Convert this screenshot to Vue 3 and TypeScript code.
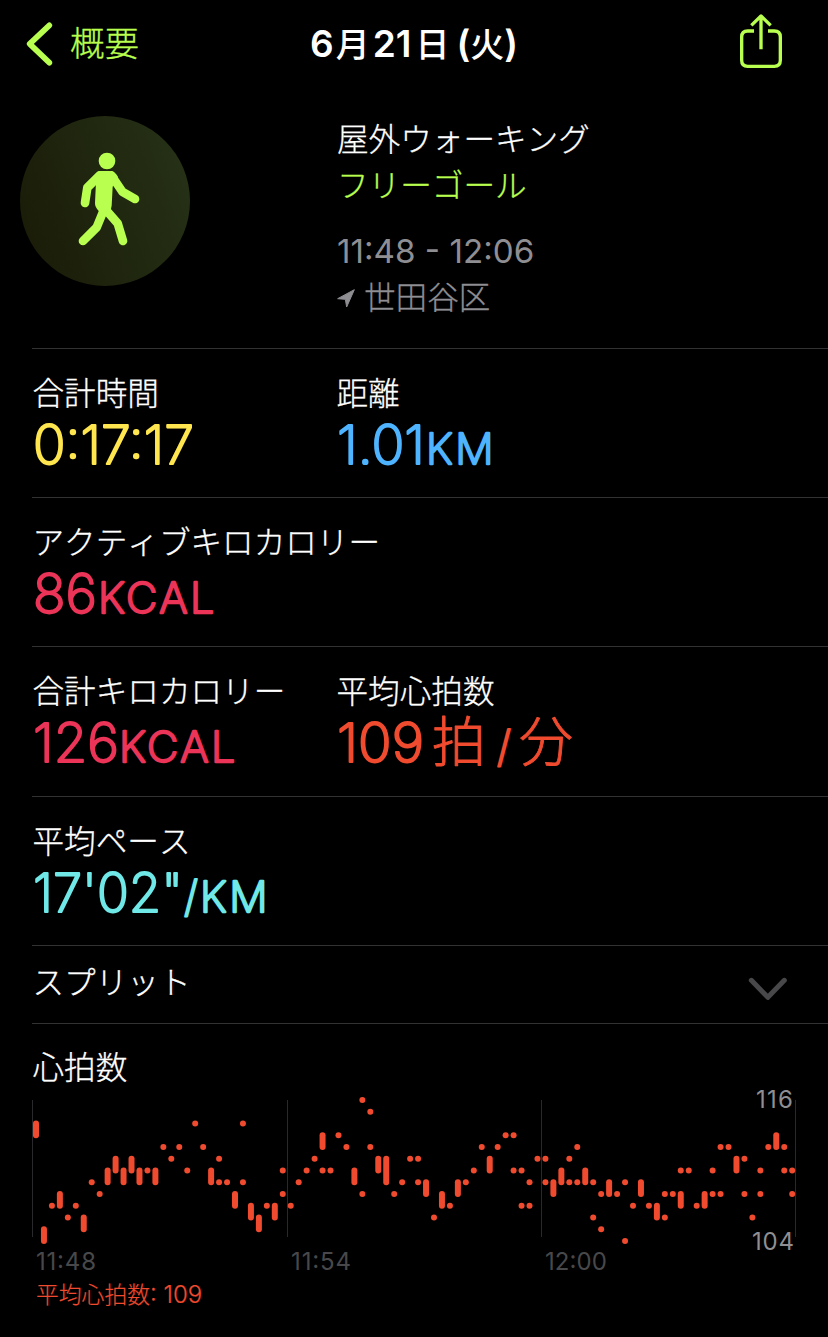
<script setup lang="ts">
interface Segment {
  text: string
  x: number
  size: number
  width: number
  kind?: 'cjk' | 'unit'
}
interface Metric {
  label: string
  tone: string
  segments: Segment[]
}

const rows: Metric[][] = [
  [
    { label: '合計時間', tone: 'yellow', segments: [{ text: '0:17:17', x: 0, size: 54, width: 161 }] },
    {
      label: '距離',
      tone: 'blue',
      segments: [
        { text: '1.01', x: 0, size: 54, width: 88 },
        { text: 'KM', x: 89, size: 42, width: 70, kind: 'unit' },
      ],
    },
  ],
  [
    {
      label: 'アクティブキロカロリー',
      tone: 'pink',
      segments: [
        { text: '86', x: 0, size: 54, width: 64 },
        { text: 'KCAL', x: 65, size: 42, width: 119, kind: 'unit' },
      ],
    },
  ],
  [
    {
      label: '合計キロカロリー',
      tone: 'pink',
      segments: [
        { text: '126', x: 0, size: 54, width: 86 },
        { text: 'KCAL', x: 86, size: 42, width: 119, kind: 'unit' },
      ],
    },
    {
      label: '平均心拍数',
      tone: 'red',
      segments: [
        { text: '109', x: 0, size: 54, width: 87 },
        { text: '拍', x: 95, size: 54, width: 54, kind: 'cjk' },
        { text: '/', x: 160, size: 43, width: 14 },
        { text: '分', x: 182, size: 54, width: 54, kind: 'cjk' },
      ],
    },
  ],
  [
    {
      label: '平均ペース',
      tone: 'teal',
      segments: [
        { text: '17\'02"', x: 0, size: 54, width: 150 },
        { text: '/', x: 151, size: 43, width: 14 },
        { text: 'KM', x: 167, size: 42, width: 70, kind: 'unit' },
      ],
    },
  ],
]

// One entry per time slot; each pair is the highest and lowest rate of a mark.
const slots: string[] = (
  '114-113 105-104 107 108-107 106 107 106-105 109 108 110-109 111-110 110-109 111-110 110-109 110 110-109 ' +
  '112 111 112 110 114 112 110-109 111,109 109 108-107 114,109 107-106 106-105 107 107-106 110,108 ' +
  '107 109 110 111 113-112,110 110 113 112 110-109 116,108 115,112 111-110 111-109 108 109 111 ' +
  '111,109 109-108 106 108-107 107 109-108 109 110 112 111-110 112 113 113,110 110,107 109,107 111 ' +
  '111,109 109-108 110-109 111,109 112,109 110-109 109,106 108,105 109-108 108 109,104 107 109-108 107 107-106 108,106 ' +
  '108 110,108-107 110 107 108-107 110,108 112,108 112 111-110 111,108 106 110,108 112 113-112 112,110 110,108'
).split(' ')

const yOf = (bpm: number): number => 10 + (116 - bpm) * 11.75

const marks = slots.flatMap((slot, i) =>
  slot.split(',').map((range) => {
    const [hi, lo = hi] = range.split('-').map(Number)
    return { x: 33 + i * 7.96, y: yOf(hi) - 3, h: yOf(lo) - yOf(hi) + 6 }
  }),
)
</script>

<template>
  <main class="screen">
    <header class="bar">
      <div class="back">
        <svg class="back-icon" viewBox="78 60 84 138"><path d="M148 73 89 128.500 148 185" /></svg>
        <span>概要</span>
      </div>
      <h1 class="title">
        <b>6</b><span class="month">月</span><b class="n21">21</b><span class="day">日</span><b class="paren">(</b><span>火</span><b>)</b>
      </h1>
      <svg class="share" viewBox="972 36 138 174">
        <path d="M1020 93H1001Q983 93 983 111V181Q983 199 1001 199H1081Q1099 199 1099 181V111Q1099 93 1081 93H1062M1041 148V50M1012 76 1041 48 1070 76" />
      </svg>
    </header>

    <section class="summary">
      <div class="badge">
        <svg viewBox="60 48 510 510">
          <circle cx="321" cy="183" r="25" />
          <path class="torso" d="M296 213H328Q346 214 354 231L338 260 335 317Q334 328 328 335H298Q284 321 285 308L288 245Z" />
          <path class="limb" d="M299 226 262 263 255 309M334 226 367 275 405 297M311 331 290 382 249 423M319 331 353 370 369 423" />
        </svg>
      </div>
      <div class="details">
        <p class="kind">屋外ウォーキング</p>
        <p class="goal">フリーゴール</p>
        <p class="time">11:48 - 12:06</p>
        <p class="place">
          <svg viewBox="50 568 54 56"><path d="M52 597 102 570 79 622 75 599Z" /></svg>
          <span>世田谷区</span>
        </p>
      </div>
    </section>

    <section v-for="(row, r) in rows" :key="r" class="row" :class="{ tall: r === 2 }">
      <div v-for="m in row" :key="m.label" class="metric" :class="m.tone">
        <h2 class="label">{{ m.label }}</h2>
        <svg class="value" width="300" height="64">
          <text
            v-for="s in m.segments"
            :key="s.x"
            :x="s.x"
            y="51"
            :font-size="s.size"
            :textLength="s.width"
            lengthAdjust="spacingAndGlyphs"
            :class="s.kind"
          >{{ s.text }}</text>
        </svg>
      </div>
    </section>

    <section class="row splits">
      <h2 class="label">スプリット</h2>
      <svg class="chevron" viewBox="84 81 120 72"><path d="M94 91 143.500 142 193 91" /></svg>
    </section>

    <section class="row heart">
      <h2 class="label">心拍数</h2>
      <svg class="chart" width="828" height="190" viewBox="0 0 828 190">
        <path class="grid" d="M32.500 10V147M287.500 10V147M541.500 10V147M795.500 10V147" />
        <rect v-for="(m, i) in marks" :key="i" :x="m.x" :y="m.y" width="6" :height="m.h" rx="3" />
        <text class="limit" x="756" y="17.500" textLength="37">116</text>
        <text class="limit" x="752" y="159.500" textLength="42">104</text>
        <text class="tick" x="36" y="179.500" textLength="60">11:48</text>
        <text class="tick" x="291" y="179.500" textLength="60">11:54</text>
        <text class="tick" x="545" y="179.500" textLength="62">12:00</text>
      </svg>
      <p class="average">平均心拍数<span>: 109</span></p>
    </section>
  </main>
</template>

<style>
body {
  background: #000;
}
</style>

<style scoped>
.screen {
  width: 828px;
  height: 1337px;
  overflow: hidden;
  background: #000;
  color: #fff;
  font-family: Inter, 'Noto Sans CJK JP', sans-serif;
  font-weight: 300;
}
h1, h2, p {
  margin: 0;
  font-weight: 300;
}
svg {
  display: block;
  flex: none;
}
.bar {
  display: grid;
  grid-template-columns: 1fr auto 1fr;
  align-items: center;
  height: 88px;
  padding: 0 26px;
  box-sizing: border-box;
}
.back {
  display: flex;
  align-items: center;
  gap: 16px;
  color: #b8ff4f;
  font-size: 34.500px;
  line-height: 50px;
  -webkit-text-stroke: 0.300px #b8ff4f;
}
.back-icon {
  width: 28px;
  height: 46px;
}
.back-icon path {
  fill: none;
  stroke: #b8ff4f;
  stroke-width: 17;
  stroke-linecap: round;
  stroke-linejoin: round;
}
.title {
  display: flex;
  align-items: baseline;
  font-size: 34px;
  line-height: 50px;
  font-weight: 500;
}
.title b {
  font-size: 37px;
  font-weight: 600;
}
.title .month {
  margin-left: 2px;
}
.title .n21 {
  margin-left: 3px;
}
.title .day {
  margin-left: 4px;
}
.title .paren {
  margin-left: 7px;
}
.share {
  justify-self: end;
  width: 46px;
  height: 58px;
  margin: 0 18px 6px 0;
}
.share path {
  fill: none;
  stroke: #b8ff4f;
  stroke-width: 10;
  stroke-linejoin: round;
}
.summary {
  display: flex;
  height: 260px;
  padding: 28px 0 0 20px;
  box-sizing: border-box;
}
.badge {
  width: 170px;
  height: 170px;
  border-radius: 50%;
  background: linear-gradient(70deg, #191a06, #273318);
}
.badge svg {
  width: 170px;
  height: 170px;
  fill: #b8ff4f;
}
.badge .limb {
  fill: none;
  stroke: #b8ff4f;
  stroke-width: 26;
  stroke-linecap: round;
  stroke-linejoin: round;
}
.details {
  margin-left: 147px;
  padding-top: 1px;
  font-size: 31.600px;
  line-height: 46px;
  font-kerning: none;
}
.kind,
.goal,
.place,
.label {
  -webkit-text-stroke: 0.300px currentColor;
}
.goal {
  color: #b8ff4f;
}
.time {
  margin-top: 19px;
  color: #8e8e93;
  font-size: 33.200px;
  font-weight: 400;
  font-kerning: auto;
}
.place {
  display: flex;
  align-items: center;
  gap: 9px;
  margin-top: 1px;
  color: #8e8e93;
}
.place svg {
  width: 18px;
  height: 18.700px;
  fill: #8e8e93;
  stroke: #8e8e93;
  stroke-width: 3;
  stroke-linejoin: round;
}
.row {
  display: grid;
  grid-template-columns: 304px 1fr;
  height: 149px;
  margin-left: 32px;
  padding-left: 1px;
  border-top: 1px solid #323234;
  box-sizing: border-box;
}
.tall {
  height: 150px;
}
.label {
  margin-left: -0.500px;
  font-size: 31.600px;
  line-height: 46px;
  font-kerning: none;
  white-space: nowrap;
}
.metric {
  padding-top: 22px;
}
.value {
  margin-top: -4px;
  overflow: visible;
  font-weight: 200;
  stroke-width: 2.200;
  stroke-linejoin: round;
}
.value .unit {
  font-weight: 250;
  letter-spacing: 2.500px;
  stroke-width: 2.400;
}
.value .cjk {
  font-weight: 300;
  stroke-width: 0.900;
}
.yellow .value { fill: #ffe64f; stroke: #ffe64f; }
.blue .value { fill: #4fb4ff; stroke: #4fb4ff; }
.pink .value { fill: #eb3458; stroke: #eb3458; }
.red .value { fill: #f04b2f; stroke: #f04b2f; }
.teal .value { fill: #70e8e8; stroke: #70e8e8; }
.splits {
  grid-template-columns: 1fr auto;
  height: 78px;
  padding-top: 14px;
  padding-right: 40px;
}
.chevron {
  width: 40px;
  height: 24px;
  margin-top: 17px;
}
.chevron path {
  fill: none;
  stroke: #48484a;
  stroke-width: 15;
  stroke-linecap: round;
  stroke-linejoin: round;
}
.heart {
  display: flex;
  flex-direction: column;
  height: 314px;
  padding-top: 21px;
}
.chart {
  margin: -1px 0 0 -33px;
  overflow: visible;
  fill: #f04b2f;
}
.grid {
  stroke: #29292b;
}
.chart text {
  font-size: 24px;
  font-weight: 380;
}
.chart .limit { fill: #8e8e93; }
.chart .tick { fill: #48484a; }
.average {
  margin-left: 3px;
  color: #f04b2f;
  font-size: 22.800px;
  line-height: 30px;
  -webkit-text-stroke: 0.200px currentColor;
}
.average span {
  font-size: 24px;
  font-weight: 350;
}
</style>
